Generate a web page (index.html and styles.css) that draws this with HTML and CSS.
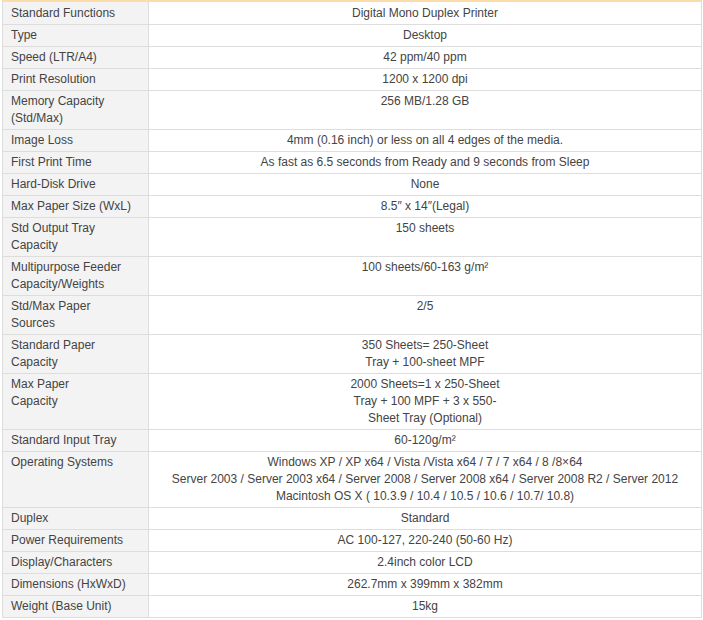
FILE: index.html
```html
<!DOCTYPE html>
<html>
<head>
<meta charset="utf-8">
<link rel="stylesheet" href="styles.css">
</head>
<body>
<table class="spec">
  <colgroup><col class="c-label"><col class="c-value"></colgroup>
  <tbody>
    <tr><th>Standard Functions</th><td>Digital Mono Duplex Printer</td></tr>
    <tr><th>Type</th><td>Desktop</td></tr>
    <tr><th>Speed (LTR/A4)</th><td>42 ppm/40 ppm</td></tr>
    <tr><th>Print Resolution</th><td>1200 x 1200 dpi</td></tr>
    <tr><th>Memory Capacity<br>(Std/Max)</th><td>256 MB/1.28 GB</td></tr>
    <tr><th>Image Loss</th><td>4mm (0.16 inch) or less on all 4 edges of the media.</td></tr>
    <tr><th>First Print Time</th><td>As fast as 6.5 seconds from Ready and 9 seconds from Sleep</td></tr>
    <tr><th>Hard-Disk Drive</th><td>None</td></tr>
    <tr><th>Max Paper Size (WxL)</th><td>8.5″ x 14″(Legal)</td></tr>
    <tr><th>Std Output Tray<br>Capacity</th><td>150 sheets</td></tr>
    <tr><th>Multipurpose Feeder<br>Capacity/Weights</th><td>100 sheets/60-163 g/m²</td></tr>
    <tr><th>Std/Max Paper<br>Sources</th><td>2/5</td></tr>
    <tr><th>Standard Paper<br>Capacity</th><td>350 Sheets= 250-Sheet<br>Tray + 100-sheet MPF</td></tr>
    <tr><th>Max Paper<br>Capacity</th><td>2000 Sheets=1 x 250-Sheet<br>Tray + 100 MPF + 3 x 550-<br>Sheet Tray (Optional)</td></tr>
    <tr><th>Standard Input Tray</th><td>60-120g/m²</td></tr>
    <tr><th>Operating Systems</th><td>Windows XP / XP x64 / Vista /Vista x64 / 7 / 7 x64 / 8 /8×64<br>Server 2003 / Server 2003 x64 / Server 2008 / Server 2008 x64 / Server 2008 R2 / Server 2012<br>Macintosh OS X ( 10.3.9 / 10.4 / 10.5 / 10.6 / 10.7/ 10.8)</td></tr>
    <tr><th>Duplex</th><td>Standard</td></tr>
    <tr><th>Power Requirements</th><td>AC 100-127, 220-240 (50-60 Hz)</td></tr>
    <tr><th>Display/Characters</th><td>2.4inch color LCD</td></tr>
    <tr><th>Dimensions (HxWxD)</th><td>262.7mm x 399mm x 382mm</td></tr>
    <tr><th>Weight (Base Unit)</th><td>15kg</td></tr>
  </tbody>
</table>
</body>
</html>
```
FILE: styles.css
```css
html, body {
  margin: 0;
  padding: 0;
  background: #ffffff;
}

.spec {
  margin: 0 0 0 2px;
  width: 700px;
  table-layout: fixed;
  border-collapse: separate;
  border-spacing: 0;
  border-top: 2px solid #fcdcab;
  border-left: 1px solid #dddddd;
  font-family: "Liberation Sans", Arial, sans-serif;
  font-size: 12px;
  line-height: 17px;
  color: #444444;
}

.c-label { width: 146px; }

.spec th,
.spec td {
  border-right: 1px solid #dddddd;
  border-bottom: 1px solid #dddddd;
  padding: 2px 8px;
  vertical-align: top;
}

.spec tr:first-child th,
.spec tr:first-child td {
  padding-top: 3px;
}

.spec th {
  background: #f3f3f3;
  font-weight: normal;
  text-align: left;
}

.spec td {
  background: #ffffff;
  text-align: center;
}
```
